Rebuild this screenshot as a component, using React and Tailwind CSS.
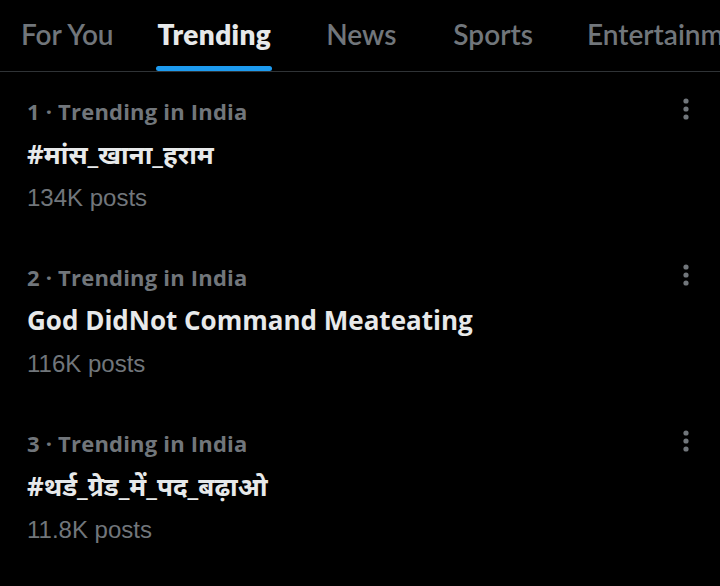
import React from "react";

const tabs = ["For You", "Trending", "News", "Sports", "Entertainment"];

const trends = [
  { rank: 1, title: "#मांस_खाना_हराम", posts: "134K posts" },
  { rank: 2, title: "God DidNot Command Meateating", posts: "116K posts" },
  { rank: 3, title: "#थर्ड_ग्रेड_में_पद_बढ़ाओ", posts: "11.8K posts" },
];

function Dots() {
  return (
    <svg width="6" height="22" viewBox="0 0 6 22" className="mt-[2px]">
      <circle cx="3" cy="3" r="2.6" fill="#71767b" />
      <circle cx="3" cy="11" r="2.6" fill="#71767b" />
      <circle cx="3" cy="19" r="2.6" fill="#71767b" />
    </svg>
  );
}

export default function App() {
  return (
    <div
      className="w-[720px] h-[586px] bg-black overflow-hidden"
      style={{ fontFamily: "'Open Sans', 'Noto Sans', sans-serif" }}
    >
      {/* TABS */}
      <div
        className="flex h-[72px] border-b border-[#2f3336] whitespace-nowrap"
        style={{ fontFamily: "Lato, 'Open Sans', sans-serif" }}
      >
        {tabs.map((t, i) => (
          <div
            key={t}
            className={
              "relative flex flex-col items-center shrink-0 " +
              ["pl-[21px] pr-[23px]", "pl-[21px] pr-[55px]", "pr-[57px]", "pr-[54px]", ""][i]
            }
          >
            <span
              className={
                "text-[28px] leading-[34px] mt-[17px] " +
                (t === "Trending"
                  ? "font-extrabold text-[#e7e9ea] tracking-[0.4px]"
                  : "text-[#71767b] font-semibold")
              }
            >
              {t}
            </span>
            {t === "Trending" && (
              <div className="absolute bottom-[0px] left-[19px] right-[54px] h-[5px] rounded-full bg-[#1d9bf0]" />
            )}
          </div>
        ))}
      </div>

      {/* TRENDS */}
      <div className="flex flex-col pt-[24px]">
        {trends.map((tr) => (
          <div key={tr.rank} className="flex justify-between pl-[27px] pr-[31px] h-[166px]">
            <div className="flex flex-col">
              <span className="text-[22px] leading-[30px] font-bold text-[#71767b] tracking-[0.2px]">
                {tr.rank} · Trending in India
              </span>
              <span className="text-[26px] leading-[36px] mt-[10px] font-bold text-[#e7e9ea]">
                {tr.title}
              </span>
              <span
                className="text-[24px] leading-[30px] mt-[11px] text-[#71767b]"
                style={{ fontFamily: "'Liberation Sans', Arial, sans-serif" }}
              >
                {tr.posts}
              </span>
            </div>
            <Dots />
          </div>
        ))}
      </div>
    </div>
  );
}
